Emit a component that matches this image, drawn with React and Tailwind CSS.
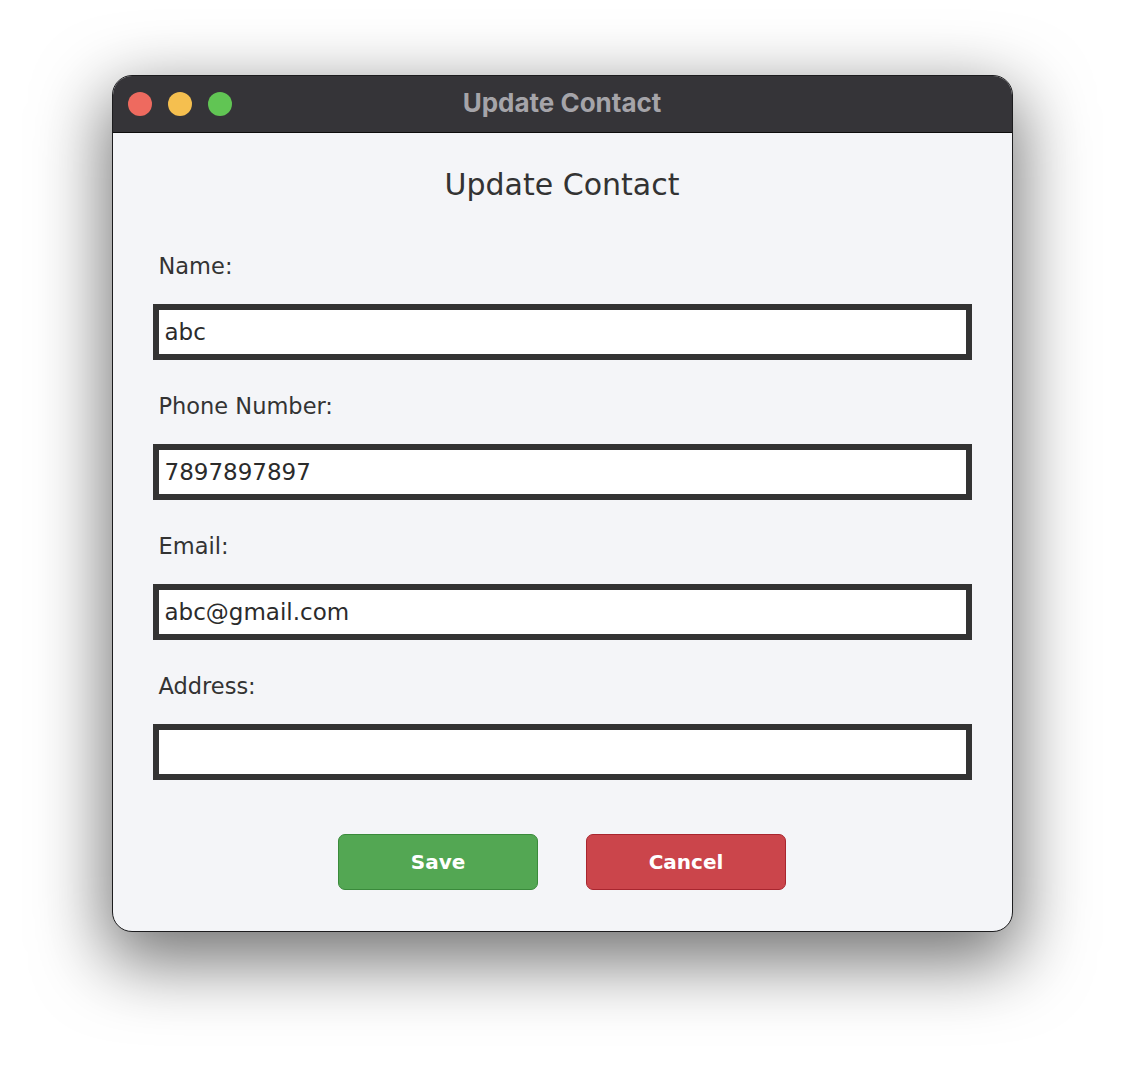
import React from "react";

const comic = { fontFamily: '"Comic Sans MS", "DejaVu Sans", sans-serif' };

function Field({ label, value, first }) {
  return (
    <div className={first ? "mt-[46px]" : "mt-[31px]"}>
      <div className="pl-[6px] h-[30px] leading-[30px] text-[22.5px] text-[#333333]">{label}</div>
      <div className="mt-[23px] h-[56px] border-[6px] border-[#333333] bg-white flex items-center pl-[6px] text-[23px] text-[#2b2b2b]">
        {value}
      </div>
    </div>
  );
}

export default function App() {
  return (
    <div className="w-[1124px] h-[1080px] bg-white flex justify-center pt-[75px]">
      <div className="w-[901px] h-[857px] rounded-[20px] border border-[#1c1c1e] overflow-hidden flex flex-col bg-[#f4f5f8] shadow-[0_24px_70px_6px_rgba(0,0,0,0.55)]">
        <div className="relative h-[57px] shrink-0 bg-[#353438] border-b border-[#0d0d0d] flex items-center">
          <div className="flex gap-[16px] pl-[15px] pb-[1px]">
            <span className="w-[24px] h-[24px] rounded-full bg-[#ee6a5f]" />
            <span className="w-[24px] h-[24px] rounded-full bg-[#f5bf4f]" />
            <span className="w-[24px] h-[24px] rounded-full bg-[#61c554]" />
          </div>
          <div
            className="absolute inset-0 flex items-center justify-center pb-[3px] text-[26px] font-bold text-[#a5a4a9]"
            style={{ fontFamily: 'Inter, "Liberation Sans", sans-serif' }}
          >
            Update Contact
          </div>
        </div>
        <div className="flex-1 flex flex-col px-[40px] pt-[32px]" style={comic}>
          <div className="h-[40px] leading-[40px] text-center text-[30px] text-[#333333]">Update Contact</div>
          <Field label="Name:" value="abc" first />
          <Field label="Phone Number:" value="7897897897" />
          <Field label="Email:" value="abc@gmail.com" />
          <Field label="Address:" value="" />
          <div className="mt-[54px] flex justify-center gap-[48px]">
            <button className="w-[200px] h-[56px] rounded-[7px] bg-[#53a753] border-[1.5px] border-[#3a8a3b] text-white font-bold text-[20px]" style={comic}>
              Save
            </button>
            <button className="w-[200px] h-[56px] rounded-[7px] bg-[#cb454b] border-[1.5px] border-[#a8262f] text-white font-bold text-[20px]" style={comic}>
              Cancel
            </button>
          </div>
        </div>
      </div>
    </div>
  );
}
